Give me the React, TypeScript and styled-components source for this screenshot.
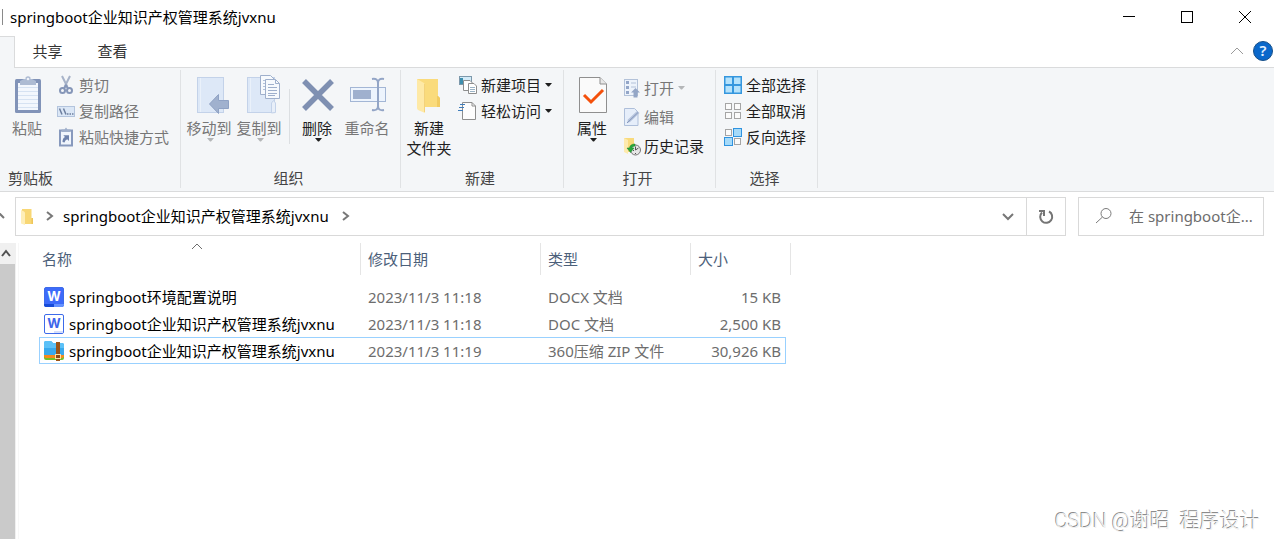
import React from 'react';
import styled, { createGlobalStyle } from 'styled-components';

const GlobalStyle = createGlobalStyle`
  * { box-sizing: border-box; }
  body {
    margin: 0;
    background: #fff;
    color: #000;
    font-family: 'Noto Sans', 'Noto Sans CJK SC', sans-serif;
    font-size: 15px;
    line-height: 20px;
  }
  button, input {
    font: inherit;
    color: inherit;
    border: 0;
    padding: 0;
    margin: 0;
    background: none;
  }
  svg { display: block; flex: none; overflow: visible; }
`;

const Window = styled.div`
  position: relative;
  display: flex;
  flex-direction: column;
  min-height: 100vh;
  overflow: hidden;
`;

/* ---------- title bar ---------- */

const TitleBar = styled.header`
  display: flex;
  align-items: center;
  height: 36px;
  padding: 0 0 2px 2px;
`;

const TitleDivider = styled.span`
  width: 1px;
  height: 16px;
  margin-right: 7px;
  background: #8a8a8a;
`;

const Title = styled.h1`
  flex: 1;
  margin: 0;
  font-size: 15px;
  font-weight: 400;
`;

const WindowButton = styled.button`
  display: flex;
  align-items: center;
  justify-content: center;
  width: 58px;
  height: 34px;
`;

/* ---------- tab strip ---------- */

const TabStrip = styled.nav`
  display: flex;
  height: 32px;
`;

const ActiveTabEdge = styled.span`
  width: 15px;
  background: #f4f6f8;
  border-top: 1px solid #dadbdc;
  border-right: 1px solid #dadbdc;
`;

const TabList = styled.div`
  display: flex;
  flex: 1;
  align-items: center;
  padding-bottom: 1px;
  border-bottom: 1px solid #dadbdc;
`;

const Tab = styled.button`
  width: 65px;
  height: 28px;
  color: #333;
`;

const TabTools = styled.div`
  display: flex;
  align-items: center;
  gap: 10px;
  margin-left: auto;
  padding-right: 1px;
`;

const IconButton = styled.button`
  display: flex;
  align-items: center;
  justify-content: center;
`;

/* ---------- ribbon ---------- */

const Ribbon = styled.section`
  display: flex;
  height: 124px;
  padding: 2px 0 3px;
  background: #f4f6f8;
  border-bottom: 1px solid #dadbdc;
`;

const Group = styled.div<{ $width: number }>`
  display: flex;
  flex-direction: column;
  width: ${(p) => p.$width}px;
  padding-top: 2px;
  border-right: 1px solid #e0e2e4;
`;

const GroupBody = styled.div<{ $inset?: number }>`
  display: flex;
  flex: 1;
  padding-left: ${(p) => p.$inset ?? 3}px;
`;

const GroupCaption = styled.div<{ $start?: boolean }>`
  padding: 0 ${(p) => (p.$start ? 8 : 4)}px 0 ${(p) => (p.$start ? 8 : 0)}px;
  text-align: ${(p) => (p.$start ? 'left' : 'center')};
  color: #444;
`;

const LargeButton = styled.button<{ $muted?: boolean }>`
  display: flex;
  flex-direction: column;
  align-items: center;
  width: 50px;
  padding-top: 3px;
  white-space: pre;
  color: ${(p) => (p.$muted ? '#777' : '#1e1e1e')};
  & > svg + span + svg { margin-left: 3px; }
`;

const LargeLabel = styled.span`
  margin-top: 3px;
`;

const SmallList = styled.div<{ $loose?: boolean }>`
  display: grid;
  grid-auto-rows: ${(p) => (p.$loose ? 29 : 26)}px;
  align-content: start;
  padding-top: ${(p) => (p.$loose ? 1 : 0)}px;
  margin-left: 5px;
`;

const SmallButton = styled.button<{ $muted?: boolean }>`
  display: flex;
  align-items: center;
  gap: 4px;
  color: ${(p) => (p.$muted ? '#777' : '#1e1e1e')};
`;

const InnerDivider = styled.span`
  width: 1px;
  height: 55px;
  margin: 17px 2px 0 5px;
  background: #dcdfe2;
`;

/* ---------- address row ---------- */

const AddressRow = styled.div`
  display: flex;
  align-items: center;
  height: 49px;
  padding-right: 10px;
`;

const UpButton = styled(IconButton)`
  justify-content: flex-start;
  width: 15px;
  padding-bottom: 2px;
`;

const AddressBox = styled.div`
  display: flex;
  flex: 1;
  align-items: center;
  height: 39px;
  border: 1px solid #d9d9d9;
  padding-left: 5px;
`;

const CrumbArrow = styled.span`
  margin: 0 11px 0 14px;
  padding-bottom: 1px;
`;

const Crumb = styled.button`
  padding-bottom: 2px;
`;

const Spacer = styled.span`
  flex: 1;
`;

const RefreshButton = styled(IconButton)`
  width: 39px;
  height: 37px;
  margin-left: 13px;
  border-left: 1px solid #d9d9d9;
`;

const SearchBox = styled.label`
  display: flex;
  align-items: center;
  width: 186px;
  height: 39px;
  margin-left: 12px;
  padding: 0 4px 2px 17px;
  border: 1px solid #d9d9d9;
`;

const SearchInput = styled.input`
  flex: 1;
  min-width: 0;
  margin-left: 16px;
  outline: 0;
  &::placeholder { color: #6d6d6d; opacity: 1; }
`;

/* ---------- file list ---------- */

const Content = styled.main`
  display: flex;
  flex: 1;
  padding-top: 2px;
`;

const Scrollbar = styled.div`
  display: flex;
  flex-direction: column;
  width: 16px;
  padding-right: 1px;
  background: #f0f0f0;
`;

const ScrollArrow = styled(IconButton)`
  width: 11px;
  height: 21px;
`;

const ScrollThumb = styled.div`
  flex: 1;
  background: #cacaca;
`;

const ListPane = styled.div`
  flex: 1;
  margin-left: 2px;
  padding-left: 20px;
  border-left: 1px solid #f7f7f7;
`;

const FileTable = styled.table`
  width: 752px;
  table-layout: fixed;
  border-collapse: separate;
  border-spacing: 0;
  tbody::before {
    content: '';
    display: block;
    height: 8px;
  }
`;

const HeadCell = styled.th<{ $first?: boolean }>`
  position: relative;
  height: 32px;
  padding: 0 0 0 ${(p) => (p.$first ? 3 : 7)}px;
  border-right: 1px solid #e5e5e5;
  font-weight: 400;
  text-align: left;
  color: #4c607a;
`;

const SortMark = styled.span`
  position: absolute;
  top: 1px;
  left: 50%;
  margin-left: -8px;
`;

const Row = styled.tr<{ $focused?: boolean }>`
  --edge: ${(p) => (p.$focused ? '#99d1ff' : 'transparent')};
  height: 27px;
`;

const Cell = styled.td<{ $end?: boolean }>`
  padding: 0 4px 0 7px;
  border: solid var(--edge);
  border-width: ${(p) => (p.$end ? '1px 1px 1px 0' : '1px 0')};
  text-align: ${(p) => (p.$end ? 'right' : 'left')};
  white-space: nowrap;
  color: #6d6d6d;
`;

const NameCell = styled(Cell)`
  padding-left: 4px;
  border-left-width: 1px;
  color: #000;
`;

const TailCell = styled.td`
  padding: 0;
`;

const FileName = styled.span`
  display: flex;
  align-items: center;
  gap: 5px;
`;

const Watermark = styled.div`
  position: absolute;
  right: 14px;
  bottom: 6px;
  font-family: Roboto, 'Noto Sans CJK SC', sans-serif;
  font-size: 20px;
  font-weight: 300;
  line-height: 24px;
  white-space: pre;
  color: #f0f0f0;
  text-shadow: -1px -1px 0 #8c8c8c;
`;

/* ---------- icons ---------- */

type ChevronProps = { dir: 'up' | 'down' | 'right'; w?: number; h?: number; color?: string; stroke?: number };

function Chevron({ dir, w = 12, h = 6, color = '#666', stroke = 1 }: ChevronProps) {
  const d = {
    up: `M0 ${h}L${w / 2} 0L${w} ${h}`,
    down: `M0 0L${w / 2} ${h}L${w} 0`,
    right: `M0 0L${w} ${h / 2}L0 ${h}`,
  }[dir];
  return (
    <svg width={w} height={h} fill="none" stroke={color} strokeWidth={stroke}>
      <path d={d} />
    </svg>
  );
}

const Caret = ({ muted }: { muted?: boolean }) => (
  <svg width="7" height="4" fill={muted ? '#b4b6b8' : '#1e1e1e'}>
    <path d="M0 0H7L4 3.5H3Z" />
  </svg>
);

const Large = ({ children }: { children: React.ReactNode }) => (
  <svg width="40" height="40" viewBox="0 0 40 40">{children}</svg>
);
const Small = ({ children }: { children: React.ReactNode }) => (
  <svg width="18" height="18" viewBox="0 0 18 18">{children}</svg>
);

const PasteIcon = () => (
  <Large>
    <rect x="8" y="4" width="26" height="34" rx="1.5" fill="#8193b8" />
    <rect x="11" y="8" width="20" height="27" fill="#f3f7fd" />
    <path d="M11 12.5H31M11 16.5H31M11 20.5H31M11 24.5H31M11 28.5H31M11 32.5H31" stroke="#d6e2f2" />
    <path d="M13 10V6L17 4H18.5V2.5Q21 0 23.5 2.5V4H25L29 6V10Z" fill="#adbbd3" />
    <circle cx="21" cy="4" r="1.3" fill="#eef2f8" />
  </Large>
);

const MoveIcon = () => (
  <Large>
    <rect x="8.5" y="2.5" width="26" height="35" fill="#dde8f7" stroke="#c3d2e9" />
    <path d="M11.5 3V37" stroke="#eaf1fa" />
    <path d="M20.5 29L29.5 19.5V25.5H39.5V33.5H29.5V38.5Z" fill="#a0b1ce" stroke="#8fa2c4" />
  </Large>
);

const CopyIcon = () => (
  <Large>
    <rect x="8.5" y="2.5" width="27" height="35" fill="#dde8f7" stroke="#c3d2e9" />
    <path d="M11.5 3V37" stroke="#eaf1fa" />
    <path d="M32.5 38V28L34.5 25.5L36.500 28V37.500Z" fill="#e8eff9" stroke="#c3d2e9" />
    <path d="M21.500 .5H31.500L35.500 4.500V19.500H21.500Z" fill="#f7fafd" stroke="#9fb0cc" />
    <path d="M24 5.500H30M24 8.500H30M24 11.500H30M24 14.500H30" stroke="#b3c1d8" />
    <path d="M26.500 4.500H36.500L40.500 8.500V23.500H26.500Z" fill="#f7fafd" stroke="#9fb0cc" />
    <path d="M36.500 4.500V8.500H40.500" fill="none" stroke="#9fb0cc" />
    <path d="M29 9.500H35M29 12.500H38M29 15.500H38M29 18.500H38M29 20.500H36" stroke="#9fb0cc" />
  </Large>
);

const DeleteIcon = () => (
  <Large>
    <path d="M7 6L35 34M35 6L7 34" stroke="#7f90b2" strokeWidth="5.500" />
  </Large>
);

const RenameIcon = () => (
  <Large>
    <rect x="3.500" y="12.500" width="35" height="14" fill="#edf4fd" stroke="#a3b6d5" />
    <rect x="6" y="15" width="18" height="9" fill="#9fb0ce" />
    <path d="M25 4Q31 3 31 8Q31 3 37 4M31 7V32M25 35Q31 36 31 31Q31 36 37 35" fill="none" stroke="#93a5c6" strokeWidth="2" />
  </Large>
);

const FolderIcon = () => (
  <Large>
    <path d="M8 4H29V21L31 23V32H8Z" fill="#fadb7c" />
    <path d="M28 21H29L31 23V32H28Z" fill="#f1cb62" />
    <path d="M8 4L15 8Q16 9 16 11V38L9 35Q8 34 8 33Z" fill="#fee9a6" />
    <path d="M15.500 9V37" stroke="#f3d27a" />
  </Large>
);

const PropertiesIcon = () => (
  <Large>
    <path d="M7.500 2.500H28L34.500 9V37.500H7.500Z" fill="#fafafa" stroke="#8f8f8f" />
    <path d="M28 2.500V9H34.500" fill="#e8e8e8" stroke="#8f8f8f" />
    <path d="M12 20L19 27L31 15" fill="none" stroke="#f4500b" strokeWidth="3" />
  </Large>
);

const CutIcon = () => (
  <Small>
    <path d="M5 0L10.500 11M13 0L7.500 11" stroke="#a7b3c8" strokeWidth="2" />
    <circle cx="5.500" cy="14.500" r="2.500" fill="none" stroke="#8596b8" strokeWidth="2" />
    <circle cx="12.500" cy="14.500" r="2.500" fill="none" stroke="#8596b8" strokeWidth="2" />
    <path d="M7 12.500L9 9.500L11 12.500" fill="none" stroke="#8596b8" strokeWidth="2" />
  </Small>
);

const PathIcon = () => (
  <Small>
    <rect x=".5" y="4.500" width="17" height="10" fill="#dbe7f6" stroke="#b3c4dd" />
    <path d="M2.500 6.500L5 12.500M6.500 6.500L9 12.500" stroke="#6d7f9f" strokeWidth="1.500" />
    <path d="M10 12H11.500M12.500 12H14M15 12H16.500" stroke="#6d7f9f" strokeWidth="1.500" />
  </Small>
);

const ShortcutIcon = () => (
  <Small>
    <rect x="3" y="2.500" width="12" height="15" fill="#f0f5fc" stroke="#8799bd" strokeWidth="2" />
    <path d="M4.500 4V1.500H7.500L9 -.5L10.500 1.500H13.500V4Z" fill="#9fafcb" />
    <path d="M5.500 14Q5.500 10 8 9L6.300 7.200H12V13L10.200 11.200Q8 12 7.500 14.500Z" fill="#6e82ac" />
  </Small>
);

const NewItemIcon = () => (
  <Small>
    <rect x=".5" y=".5" width="12" height="8" fill="#d3ebf8" stroke="#7c98ab" />
    <path d="M1 2H4V8H1Z" fill="#3f8fae" />
    <path d="M4.500 4.500H11L13.500 7V14.500H4.500Z" fill="#fff" stroke="#8e8e8e" />
    <path d="M9.500 7.500H15L17.500 10V17.500H9.500Z" fill="#fff" stroke="#8e8e8e" />
    <path d="M11 11.500H16M11 13.500H16M11 15.500H16" stroke="#9ab3c6" />
  </Small>
);

const EasyAccessIcon = () => (
  <Small>
    <path d="M3.500 .5H13L16.500 4V17.500H3.500Z" fill="#fdfdfd" stroke="#8e8e8e" />
    <path d="M13 .5V4H16.500" fill="none" stroke="#8e8e8e" />
    <path d="M1 2.500H6M0 5.500H5M-1 8.500H4" stroke="#3f7dbb" />
  </Small>
);

const OpenIcon = () => (
  <Small>
    <rect x="2.500" y=".5" width="13" height="16" fill="#edf3fb" stroke="#b3c2d9" />
    <path d="M4 2H7V5H4ZM4 7H7V10H4ZM4 12H7V15H4Z" fill="#93a6c8" />
    <path d="M9 4H14M9 8H14" stroke="#b3c2d9" />
    <path d="M13.500 9L18 13.500H15.500V18.500H11.500V13.500H9Z" fill="#94a6c6" />
  </Small>
);

const EditIcon = () => (
  <Small>
    <path d="M2.500 .5H12.500L16 4V17.500H2.500Z" fill="#e6eefa" stroke="#aebfda" />
    <path d="M5 15L6 11.500L15 3L17.500 5L8 14Z" fill="#b5c3dc" />
    <path d="M5 15L16 4.500" stroke="#8799be" />
  </Small>
);

const HistoryIcon = () => (
  <Small>
    <path d="M2 1H12V8L14 9V15H2Z" fill="#f8da7c" />
    <path d="M2 1L6 3V17L2 15Z" fill="#fdeaae" />
    <circle cx="13.500" cy="13" r="5" fill="#e6e6e6" stroke="#777" />
    <path d="M13.500 9.500V13L16.500 11M11 13.500H12M13.500 16V17" fill="none" stroke="#555" />
    <path d="M13 7Q8 7 7.500 11H5L8.500 15.500L12 11H9.800Q10.500 9 13 9Z" fill="#29a83c" stroke="#168228" strokeWidth=".5" />
  </Small>
);

const on = { fill: '#a5daf9', stroke: '#2f93df' };
const off = { fill: '#fbfbfb', stroke: '#a5a5a5' };

const SelectAllIcon = () => (
  <Small>
    <rect x="0" y="0" width="18" height="18" fill="#3597de" />
    <path d="M1.500 1.500H8V8H1.500ZM10 1.500H16.500V8H10ZM1.500 10H8V16.500H1.500ZM10 10H16.500V16.500H10Z" fill="#b5e2fb" />
  </Small>
);

const SelectNoneIcon = () => (
  <Small>
    {[1.5, 10.5].map((x) => [1.5, 10.5].map((y) => <rect key={`${x}-${y}`} x={x} y={y} width="6" height="6" {...off} />))}
  </Small>
);

const InvertIcon = () => (
  <Small>
    <rect x="1.500" y="1.500" width="6" height="6" {...off} />
    <rect x="10.500" y="10.500" width="6" height="6" {...off} />
    <rect x="9.500" y=".5" width="8" height="8" {...on} />
    <rect x=".5" y="9.500" width="8" height="8" {...on} />
  </Small>
);

const AddressFolderIcon = () => (
  <svg width="12" height="16" viewBox="0 0 12 16">
    <path d="M1 0H10.500V9L12 10V15H1Z" fill="#f8d775" />
    <path d="M0 1L3 2.500Q4 3 4 4V16L0 14.500Z" fill="#feeeb8" />
    <path d="M10.500 9H12V15H10.500Z" fill="#eec65b" />
  </svg>
);

const RefreshIcon = () => (
  <svg width="16" height="16" viewBox="0 0 16 16" fill="none" stroke="#757575" strokeWidth="2">
    <path d="M11 2.500A6 6 0 1 1 4 3.500" />
    <path d="M1 2H6V7" />
  </svg>
);

const SearchIcon = () => (
  <svg width="17" height="17" viewBox="0 0 17 17" fill="none" stroke="#7b7b7b">
    <circle cx="10" cy="6.500" r="5" />
    <path d="M6.500 10L0 16" />
  </svg>
);

const HelpIcon = () => (
  <svg width="20" height="20" viewBox="0 0 20 20">
    <circle cx="10" cy="10" r="9.500" fill="#0a68cb" stroke="#174f88" />
    <text x="10" y="15" textAnchor="middle" fontSize="15" fontWeight="600" fill="#e4f1ff">?</text>
  </svg>
);

const DocIcon = ({ filled }: { filled?: boolean }) => (
  <svg width="20" height="20" viewBox="0 0 20 20">
    <rect x=".5" y=".5" width="19" height="19" rx="1.500" fill={filled ? '#3d6bfa' : '#fff'} stroke="#3d6bea" />
    {filled ? (
      <>
        <path d="M0 17H10V20H2Q0 20 0 18Z" fill="#164bd8" />
        <path d="M10 17H20V18Q20 20 18 20H10Z" fill="#6592ff" />
      </>
    ) : (
      <path d="M10 17H19V19H10Z" fill="#d5dffc" />
    )}
    <text x="10" y="14" textAnchor="middle" fontFamily="Inter, sans-serif" fontSize="13" fontWeight="700" fill={filled ? '#fff' : '#3d66ea'}>W</text>
  </svg>
);

const ZipIcon = () => (
  <svg width="20" height="20" viewBox="0 0 20 20">
    <path d="M0 10H20V17Q20 19 18 19H2Q0 19 0 17Z" fill="#74bf2a" />
    <path d="M0 10H20V15Q20 17 18 17H2Q0 17 0 15Z" fill="#f68a1c" />
    <path d="M0 2Q0 0 2 0H7L9 2H18Q20 2 20 4V14H0Z" fill="#38a9ed" />
    <path d="M0 2Q0 0 2 0H7L9 2H18Q20 2 20 4V7H0Z" fill="#5cc1f7" />
    <rect x="12" y="1" width="4" height="19" fill="#9a5418" />
    <rect x="11.500" y="13.500" width="5" height="4" fill="#8c4a13" stroke="#ffe0a0" />
  </svg>
);

/* ---------- data ---------- */

const files = [
  { name: 'springboot环境配置说明', date: '2023/11/3 11:18', type: 'DOCX 文档', size: '15 KB', icon: <DocIcon filled /> },
  { name: 'springboot企业知识产权管理系统jvxnu', date: '2023/11/3 11:18', type: 'DOC 文档', size: '2,500 KB', icon: <DocIcon /> },
  { name: 'springboot企业知识产权管理系统jvxnu', date: '2023/11/3 11:19', type: '360压缩 ZIP 文件', size: '30,926 KB', icon: <ZipIcon />, focused: true },
];

export default function App() {
  return (
    <Window>
      <GlobalStyle />
      <TitleBar>
        <TitleDivider />
        <Title>springboot企业知识产权管理系统jvxnu</Title>
        <WindowButton aria-label="最小化">
          <svg width="12" height="12" stroke="#000"><path d="M0 5.500H12" /></svg>
        </WindowButton>
        <WindowButton aria-label="最大化">
          <svg width="12" height="12" fill="none" stroke="#000"><rect x=".5" y=".5" width="11" height="11" /></svg>
        </WindowButton>
        <WindowButton aria-label="关闭">
          <svg width="12" height="12" stroke="#000"><path d="M0 0L12 12M12 0L0 12" /></svg>
        </WindowButton>
      </TitleBar>

      <TabStrip>
        <ActiveTabEdge />
        <TabList>
          <Tab>共享</Tab>
          <Tab>查看</Tab>
          <TabTools>
            <IconButton aria-label="最小化功能区"><Chevron dir="up" color="#9a9a9a" /></IconButton>
            <IconButton aria-label="帮助"><HelpIcon /></IconButton>
          </TabTools>
        </TabList>
      </TabStrip>

      <Ribbon>
        <Group $width={181}>
          <GroupBody $inset={2}>
            <LargeButton $muted><PasteIcon /><LargeLabel>粘贴</LargeLabel></LargeButton>
            <SmallList>
              <SmallButton $muted><CutIcon />剪切</SmallButton>
              <SmallButton $muted><PathIcon />复制路径</SmallButton>
              <SmallButton $muted><ShortcutIcon />粘贴快捷方式</SmallButton>
            </SmallList>
          </GroupBody>
          <GroupCaption $start>剪贴板</GroupCaption>
        </Group>

        <Group $width={220}>
          <GroupBody>
            <LargeButton $muted><MoveIcon /><LargeLabel>移动到</LargeLabel><Caret muted /></LargeButton>
            <LargeButton $muted><CopyIcon /><LargeLabel>复制到</LargeLabel><Caret muted /></LargeButton>
            <InnerDivider />
            <LargeButton><DeleteIcon /><LargeLabel>删除</LargeLabel><Caret /></LargeButton>
            <LargeButton $muted><RenameIcon /><LargeLabel>重命名</LargeLabel></LargeButton>
          </GroupBody>
          <GroupCaption>组织</GroupCaption>
        </Group>

        <Group $width={163}>
          <GroupBody>
            <LargeButton><FolderIcon /><LargeLabel>{'新建\n文件夹'}</LargeLabel></LargeButton>
            <SmallList>
              <SmallButton><NewItemIcon />新建项目<Caret /></SmallButton>
              <SmallButton><EasyAccessIcon />轻松访问<Caret /></SmallButton>
            </SmallList>
          </GroupBody>
          <GroupCaption>新建</GroupCaption>
        </Group>

        <Group $width={152}>
          <GroupBody>
            <LargeButton><PropertiesIcon /><LargeLabel>属性</LargeLabel><Caret /></LargeButton>
            <SmallList $loose>
              <SmallButton $muted><OpenIcon />打开<Caret muted /></SmallButton>
              <SmallButton $muted><EditIcon />编辑</SmallButton>
              <SmallButton><HistoryIcon />历史记录</SmallButton>
            </SmallList>
          </GroupBody>
          <GroupCaption>打开</GroupCaption>
        </Group>

        <Group $width={102}>
          <GroupBody>
            <SmallList>
              <SmallButton><SelectAllIcon />全部选择</SmallButton>
              <SmallButton><SelectNoneIcon />全部取消</SmallButton>
              <SmallButton><InvertIcon />反向选择</SmallButton>
            </SmallList>
          </GroupBody>
          <GroupCaption>选择</GroupCaption>
        </Group>
      </Ribbon>

      <AddressRow>
        <UpButton aria-label="上移">
          <svg width="5" height="6" fill="none" stroke="#777" strokeWidth="2"><path d="M-1 0L4 5" /></svg>
        </UpButton>
        <AddressBox>
          <AddressFolderIcon />
          <CrumbArrow><Chevron dir="right" w={5} h={8} color="#777" stroke={2} /></CrumbArrow>
          <Crumb>springboot企业知识产权管理系统jvxnu</Crumb>
          <CrumbArrow><Chevron dir="right" w={5} h={8} color="#777" stroke={2} /></CrumbArrow>
          <Spacer />
          <IconButton aria-label="以前的位置"><Chevron dir="down" w={10} h={5} color="#777" stroke={2} /></IconButton>
          <RefreshButton aria-label="刷新"><RefreshIcon /></RefreshButton>
        </AddressBox>
        <SearchBox>
          <SearchIcon />
          <SearchInput type="text" aria-label="搜索" placeholder="在 springboot企..." />
        </SearchBox>
      </AddressRow>

      <Content>
        <Scrollbar>
          <ScrollArrow aria-label="向上滚动"><Chevron dir="up" w={8} h={5} color="#505050" stroke={2} /></ScrollArrow>
          <ScrollThumb />
        </Scrollbar>
        <ListPane>
          <FileTable>
            <colgroup>
              <col width="322" />
              <col width="180" />
              <col width="150" />
              <col width="95" />
              <col width="5" />
            </colgroup>
            <thead>
              <tr>
                <HeadCell $first>
                  名称
                  <SortMark><Chevron dir="up" w={10} h={5} color="#6d6d6d" /></SortMark>
                </HeadCell>
                <HeadCell>修改日期</HeadCell>
                <HeadCell>类型</HeadCell>
                <HeadCell colSpan={2}>大小</HeadCell>
              </tr>
            </thead>
            <tbody>
              {files.map((f, i) => (
                <Row key={i} $focused={f.focused}>
                  <NameCell><FileName>{f.icon}{f.name}</FileName></NameCell>
                  <Cell>{f.date}</Cell>
                  <Cell>{f.type}</Cell>
                  <Cell $end>{f.size}</Cell>
                  <TailCell />
                </Row>
              ))}
            </tbody>
          </FileTable>
        </ListPane>
      </Content>

      <Watermark>CSDN @谢昭  程序设计</Watermark>
    </Window>
  );
}
